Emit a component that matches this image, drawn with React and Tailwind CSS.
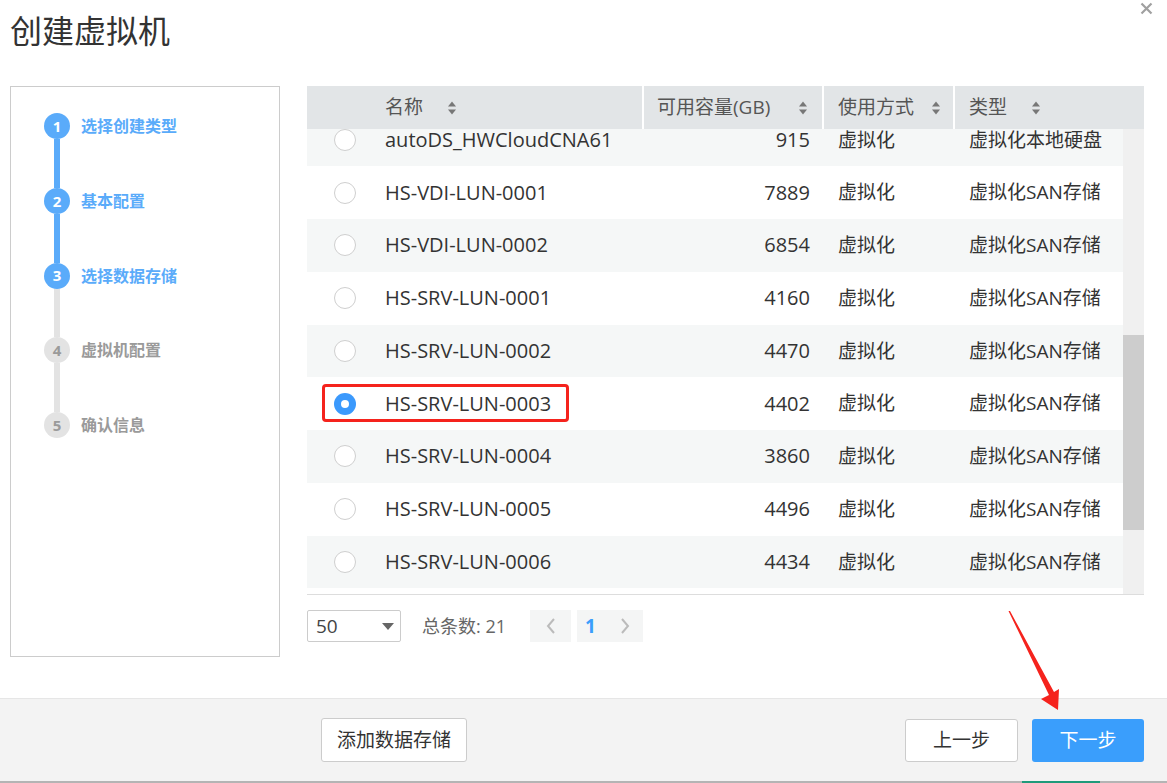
import React from 'react';

const steps = [
  { n: 1, label: '选择创建类型', done: true },
  { n: 2, label: '基本配置', done: true },
  { n: 3, label: '选择数据存储', done: true },
  { n: 4, label: '虚拟机配置', done: false },
  { n: 5, label: '确认信息', done: false },
];

const rows = [
  { name: 'autoDS_HWCloudCNA61', cap: 915, mode: '虚拟化', type: '虚拟化本地硬盘' },
  { name: 'HS-VDI-LUN-0001', cap: 7889, mode: '虚拟化', type: '虚拟化SAN存储' },
  { name: 'HS-VDI-LUN-0002', cap: 6854, mode: '虚拟化', type: '虚拟化SAN存储' },
  { name: 'HS-SRV-LUN-0001', cap: 4160, mode: '虚拟化', type: '虚拟化SAN存储' },
  { name: 'HS-SRV-LUN-0002', cap: 4470, mode: '虚拟化', type: '虚拟化SAN存储' },
  { name: 'HS-SRV-LUN-0003', cap: 4402, mode: '虚拟化', type: '虚拟化SAN存储', selected: true },
  { name: 'HS-SRV-LUN-0004', cap: 3860, mode: '虚拟化', type: '虚拟化SAN存储' },
  { name: 'HS-SRV-LUN-0005', cap: 4496, mode: '虚拟化', type: '虚拟化SAN存储' },
  { name: 'HS-SRV-LUN-0006', cap: 4434, mode: '虚拟化', type: '虚拟化SAN存储' },
];

const SortIcon = () => (
  <svg width="10" height="16" viewBox="0 0 10 16" className="shrink-0">
    <polygon points="1,6.5 5,1.5 9,6.5" fill="#777" />
    <polygon points="1,9.5 5,14.5 9,9.5" fill="#777" />
  </svg>
);

const Radio = ({ checked }) =>
  checked ? (
    <div className="w-[22px] h-[22px] rounded-full bg-[#3b99fc] flex items-center justify-center">
      <div className="w-[8px] h-[8px] rounded-full bg-white" />
    </div>
  ) : (
    <div className="w-[22px] h-[22px] rounded-full border border-[#cfcfcf] bg-white" />
  );

const Stepper = () => (
  <div className="w-[270px] h-[571px] border border-[#cccccc] pt-[26px] pl-[33px]">
    {steps.map((s, i) => {
      const last = i === steps.length - 1;
      const lineBlue = i < 2;
      return (
        <div key={s.n} className="flex items-start">
          <div className="w-[26px] flex flex-col items-center">
            <div
              className={`w-[26px] h-[26px] rounded-full flex items-center justify-center text-[15px] font-bold ${
                s.done ? 'bg-[#5aabfa] text-white' : 'bg-[#e3e3e3] text-[#9a9a9a]'
              }`}
            >
              {s.n}
            </div>
            {!last && (
              <div className={`w-[6px] h-[48.75px] ${lineBlue ? 'bg-[#5aabfa]' : 'bg-[#e3e3e3]'}`} />
            )}
          </div>
          <div
            className={`h-[26px] flex items-center ml-[11px] text-[16px] font-bold ${
              s.done ? 'text-[#5aabfa]' : 'text-[#9a9a9a]'
            }`}
          >
            {s.label}
          </div>
        </div>
      );
    })}
  </div>
);

const DataTable = () => (
  <div className="w-[837px]">
    {/* header */}
    <div className="flex h-[43px] bg-[#e2e5e7] text-[19px] text-[#555]">
      <div className="w-[335px] flex items-center pl-[78px] gap-[24px]">
        <span>名称</span>
        <SortIcon />
      </div>
      <div className="w-[2px] bg-white" />
      <div className="w-[178px] flex items-center justify-between pl-[13px] pr-[14px]">
        <span>可用容量(GB)</span>
        <SortIcon />
      </div>
      <div className="w-[2px] bg-white" />
      <div className="w-[129px] flex items-center justify-between pl-[14px] pr-[12px]">
        <span>使用方式</span>
        <SortIcon />
      </div>
      <div className="w-[2px] bg-white" />
      <div className="flex-1 flex items-center pl-[14px] gap-[24px]">
        <span>类型</span>
        <SortIcon />
      </div>
    </div>

    {/* body */}
    <div className="flex h-[466px] border-b border-[#dddddd]">
      <div className="flex-1">
        {rows.map((r, i) => (
          <div
            key={r.name}
            className={`relative flex items-center text-[19px] text-[#333] ${
              i === 0 ? 'h-[37.25px] pb-[15px]' : 'h-[52.75px]'
            } ${i % 2 === 0 ? 'bg-[#f5f7f7]' : 'bg-white'}`}
          >
            <div className="w-[337px] flex items-center pl-[27px]">
              <Radio checked={r.selected} />
              <span className="ml-[29px] text-[20px]">{r.name}</span>
            </div>
            <div className="w-[180px] text-right pr-[14px] text-[20px]">{r.cap}</div>
            <div className="w-[131px] pl-[14px]">{r.mode}</div>
            <div className="flex-1 pl-[14px]">{r.type}</div>
            {r.selected && (
              <div className="absolute left-[15px] top-[7px] w-[247px] h-[38px] border-[3px] border-[#f5231d] rounded-[4px]" />
            )}
          </div>
        ))}
      </div>
      <div className="w-[21px] bg-[#f0f0f0] pt-[206px]">
        <div className="h-[195px] bg-[#cdcdcd]" />
      </div>
    </div>

    {/* pagination */}
    <div className="flex items-center mt-[15px] h-[32px] text-[18px]">
      <div className="w-[94px] h-[32px] border border-[#cccccc] rounded-[2px] flex items-center justify-between pl-[8px] pr-[6px] text-[#444]">
        <span className="text-[19px]">50</span>
        <svg width="12" height="7" viewBox="0 0 12 7">
          <polygon points="0,0 12,0 6,7" fill="#666" />
        </svg>
      </div>
      <span className="ml-[21px] text-[#666]">总条数: 21</span>
      <div className="ml-[24px] w-[41px] h-[32px] bg-[#f4f5f5] flex items-center justify-center">
        <svg width="10" height="16" viewBox="0 0 10 16">
          <polyline points="8,1 2,8 8,15" fill="none" stroke="#bbb" strokeWidth="2" />
        </svg>
      </div>
      <div className="ml-[6px] w-[66px] h-[32px] bg-[#f4f5f5] flex items-center pl-[8px]">
        <span className="font-bold text-[19px] text-[#3a9efc]">1</span>
        <svg width="10" height="16" viewBox="0 0 10 16" className="ml-[24px]">
          <polyline points="2,1 8,8 2,15" fill="none" stroke="#bbb" strokeWidth="2" />
        </svg>
      </div>
    </div>
  </div>
);

export default function App() {
  return (
    <div className="relative w-[1167px] h-[783px] bg-white overflow-hidden font-['Open_Sans','Noto_Sans_CJK_SC',sans-serif]">
      {/* title */}
      <div className="pt-[10px] pl-[10px] h-[86px]">
        <h1 className="text-[32px] leading-[42px] text-[#333] font-normal">创建虚拟机</h1>
      </div>

      {/* close */}
      <svg className="absolute left-[1140px] top-[2px]" width="13" height="13" viewBox="0 0 13 13">
        <path d="M1.5 1.5 L11.5 11.5 M11.5 1.5 L1.5 11.5" stroke="#a0a0a0" strokeWidth="2.2" />
      </svg>

      {/* content */}
      <div className="flex pl-[10px] gap-[27px] h-[612px]">
        <Stepper />
        <DataTable />
      </div>

      {/* footer */}
      <div className="h-[83px] bg-[#f3f3f3] border-t border-[#e6e6e6] flex items-center pl-[321px] pr-[23px] text-[19px]">
        <button className="w-[146px] h-[44px] bg-white border border-[#cccccc] rounded-[3px] text-[#333]">
          添加数据存储
        </button>
        <div className="flex-1" />
        <button className="w-[113px] h-[43px] bg-white border border-[#cccccc] rounded-[3px] text-[#333]">
          上一步
        </button>
        <button className="ml-[14px] w-[112px] h-[43px] bg-[#3a9efc] rounded-[3px] text-white">下一步</button>
      </div>
      <div className="flex h-[2px] bg-[#b4b4b4]">
        <div className="w-[1022px]" />
        <div className="w-[78px] bg-[#1f9a7a]" />
      </div>

      {/* annotation arrow */}
      <svg className="absolute left-0 top-0 pointer-events-none" width="1167" height="783" viewBox="0 0 1167 783">
        <polygon
          points="1008.5,611 1010,611 1054,692 1059,689 1058,710 1041,699 1049,695"
          fill="#f5231d"
        />
      </svg>
    </div>
  );
}
